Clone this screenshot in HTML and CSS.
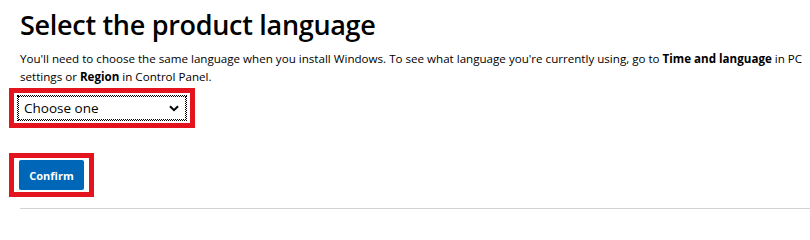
FILE: index.html
```html
<!DOCTYPE html>
<html lang="en">
<head>
<meta charset="utf-8">
<link rel="stylesheet" href="styles.css">
</head>
<body>
<main class="page">
  <h1 class="title">Select the product language</h1>
  <p class="intro">You'll need to choose the same language when you install Windows. To see what language you're currently using, go to <strong>Time and language</strong> in PC settings or <strong>Region</strong> in Control Panel.</p>
  <div class="mark mark-select">
    <div class="select-wrap">
      <select class="select">
        <option>Choose one</option>
      </select>
      <svg class="chevron" width="10" height="7" viewBox="0 0 10 7"><path d="M1 1.2 L5 5.2 L9 1.2" fill="none" stroke="#000" stroke-width="2"/></svg>
    </div>
  </div>
  <div class="mark mark-button">
    <button class="confirm" type="button">Confirm</button>
  </div>
  <hr class="rule">
</main>
</body>
</html>
```
FILE: styles.css
```css
html, body {
  margin: 0;
  padding: 0;
  background: #fff;
}
.page {
  padding: 0 0 0 9px;
  font-family: "Open Sans", "Noto Sans", sans-serif;
  color: #000;
}
.title {
  margin: 0 0 0 11px;
  padding-top: 7px;
  font-size: 27px;
  font-weight: 600;
  line-height: 36px;
  letter-spacing: -0.3px;
}
.intro {
  margin: 7px 0 0 11px;
  font-size: 11.6px;
  line-height: 18px;
  max-width: 790px;
}
.intro strong {
  font-weight: 700;
}
.mark {
  display: inline-block;
  border: 5px solid #e3141e;
}
.mark-select {
  display: block;
  width: fit-content;
  margin-top: 2px;
  padding: 2px 3px;
}
.select-wrap {
  position: relative;
}
.select {
  display: block;
  appearance: none;
  -webkit-appearance: none;
  width: 170px;
  height: 26px;
  margin: 0;
  padding: 0 0 0 6px;
  border: 1px dotted #000;
  outline: 1px dotted #000;
  outline-offset: -2px;
  background: #fff;
  font-family: inherit;
  font-size: 13.5px;
  color: #000;
}
.chevron {
  position: absolute;
  right: 8px;
  top: 10px;
}
.mark-button {
  display: block;
  width: fit-content;
  margin-top: 25px;
  padding: 2px 5px;
}
.confirm {
  display: block;
  width: 65px;
  height: 30px;
  margin: 0;
  padding: 0;
  border: 0;
  border-radius: 2px;
  background: #0067b8;
  color: #fff;
  font-family: inherit;
  font-size: 11px;
  font-weight: 700;
}
.rule {
  margin: 11px 0 0 11px;
  border: 0;
  border-top: 1px solid #d2d2d2;
  height: 0;
}
```
